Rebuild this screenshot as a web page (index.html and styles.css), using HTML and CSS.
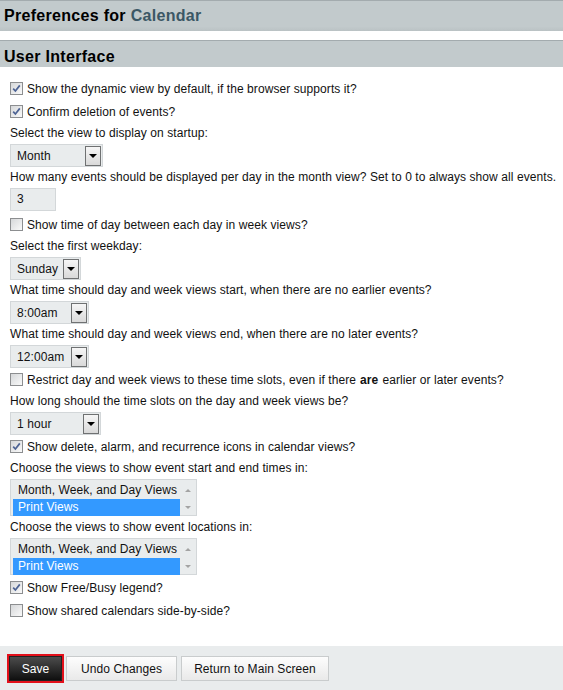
FILE: index.html
```html
<!DOCTYPE html>
<html>
<head>
<meta charset="utf-8">
<title>Preferences for Calendar</title>
<link rel="stylesheet" href="styles.css">
</head>
<body>
<div class="page">
  <h1 class="hdr hdr-main">Preferences for <span class="app">Calendar</span></h1>
  <h2 class="hdr hdr-sec">User Interface</h2>

  <div class="content">
    <label class="chk"><span class="cb on"><svg width="13" height="13" viewBox="0 0 13 13"><defs><linearGradient id="g1" x1="0" y1="0" x2="1" y2="1"><stop offset="0" stop-color="#d4d6d8"/><stop offset="1" stop-color="#fbfbfb"/></linearGradient></defs><rect x="0.5" y="0.5" width="12" height="12" fill="url(#g1)" stroke="#8c8e90"/><path d="M3.2 6.6 L5.4 9 L9.8 3.4" fill="none" stroke="#4d6394" stroke-width="1.7"/></svg></span>Show the dynamic view by default, if the browser supports it?</label>
    <label class="chk"><span class="cb on"><svg width="13" height="13" viewBox="0 0 13 13"><rect x="0.5" y="0.5" width="12" height="12" fill="url(#g1)" stroke="#8c8e90"/><path d="M3.2 6.6 L5.4 9 L9.8 3.4" fill="none" stroke="#4d6394" stroke-width="1.7"/></svg></span>Confirm deletion of events?</label>

    <div class="lbl">Select the view to display on startup:</div>
    <div class="row-sel"><div class="sel w-month"><span class="val">Month</span><span class="arr"></span></div></div>

    <div class="lbl">How many events should be displayed per day in the month view? Set to 0 to always show all events.</div>
    <div class="row-inp"><div class="inp">3</div></div>

    <label class="chk"><span class="cb"><svg width="13" height="13" viewBox="0 0 13 13"><rect x="0.5" y="0.5" width="12" height="12" fill="url(#g1)" stroke="#8c8e90"/></svg></span>Show time of day between each day in week views?</label>

    <div class="lbl">Select the first weekday:</div>
    <div class="row-sel"><div class="sel w-day"><span class="val">Sunday</span><span class="arr"></span></div></div>

    <div class="lbl">What time should day and week views start, when there are no earlier events?</div>
    <div class="row-sel"><div class="sel w-time"><span class="val">8:00am</span><span class="arr"></span></div></div>

    <div class="lbl">What time should day and week views end, when there are no later events?</div>
    <div class="row-sel"><div class="sel w-time"><span class="val">12:00am</span><span class="arr"></span></div></div>

    <label class="chk"><span class="cb"><svg width="13" height="13" viewBox="0 0 13 13"><rect x="0.5" y="0.5" width="12" height="12" fill="url(#g1)" stroke="#8c8e90"/></svg></span>Restrict day and week views to these time slots, even if there <b>are</b> earlier or later events?</label>

    <div class="lbl">How long should the time slots on the day and week views be?</div>
    <div class="row-sel"><div class="sel w-slot"><span class="val">1 hour</span><span class="arr"></span></div></div>

    <label class="chk"><span class="cb on"><svg width="13" height="13" viewBox="0 0 13 13"><rect x="0.5" y="0.5" width="12" height="12" fill="url(#g1)" stroke="#8c8e90"/><path d="M3.2 6.6 L5.4 9 L9.8 3.4" fill="none" stroke="#4d6394" stroke-width="1.7"/></svg></span>Show delete, alarm, and recurrence icons in calendar views?</label>

    <div class="lbl">Choose the views to show event start and end times in:</div>
    <div class="row-list">
      <div class="list">
        <div class="opts"><div class="opt">Month, Week, and Day Views</div><div class="opt sel-opt">Print Views</div></div>
        <div class="sb"><span class="up"></span><span class="dn"></span></div>
      </div>
    </div>

    <div class="lbl">Choose the views to show event locations in:</div>
    <div class="row-list">
      <div class="list">
        <div class="opts"><div class="opt">Month, Week, and Day Views</div><div class="opt sel-opt">Print Views</div></div>
        <div class="sb"><span class="up"></span><span class="dn"></span></div>
      </div>
    </div>

    <label class="chk"><span class="cb on"><svg width="13" height="13" viewBox="0 0 13 13"><rect x="0.5" y="0.5" width="12" height="12" fill="url(#g1)" stroke="#8c8e90"/><path d="M3.2 6.6 L5.4 9 L9.8 3.4" fill="none" stroke="#4d6394" stroke-width="1.7"/></svg></span>Show Free/Busy legend?</label>
    <label class="chk"><span class="cb"><svg width="13" height="13" viewBox="0 0 13 13"><rect x="0.5" y="0.5" width="12" height="12" fill="url(#g1)" stroke="#8c8e90"/></svg></span>Show shared calendars side-by-side?</label>
  </div>

  <div class="bar">
    <button class="btn btn-save">Save</button>
    <button class="btn btn-undo">Undo Changes</button>
    <button class="btn btn-ret">Return to Main Screen</button>
  </div>
</div>
</body>
</html>
```

FILE: styles.css
```css
html, body {
  margin: 0;
  padding: 0;
  background: #fff;
}
body {
  font-family: "Liberation Sans", Arial, sans-serif;
  font-size: 12px;
  letter-spacing: 0.08px;
  color: #111;
}
.page {
  width: 563px;
  height: 690px;
  display: flex;
  flex-direction: column;
}
.hdr {
  margin: 0;
  font-size: 16px;
  font-weight: bold;
  letter-spacing: 0.3px;
  color: #000;
  background: linear-gradient(#c2cacc 0%, #c2cacc 85%, #bac2c4 100%);
  border-top: 1px solid #a3abae;
  padding-left: 4px;
}
.hdr-main {
  height: 30px;
  line-height: 30px;
}
.app {
  color: #3b5765;
}
.hdr-sec {
  margin-top: 9px;
  height: 26px;
  line-height: 31px;
  background: #c2cacc;
}
.content {
  padding: 10px 0 0 10px;
  display: flex;
  flex-direction: column;
  flex: 1;
}
.chk {
  height: 23px;
  display: flex;
  align-items: center;
  gap: 4px;
}
.cb {
  width: 13px;
  height: 13px;
  display: block;
}
.cb svg {
  display: block;
}
.lbl {
  height: 21px;
  line-height: 21px;
  white-space: nowrap;
}
.row-sel {
  height: 23px;
}
.sel {
  box-sizing: border-box;
  height: 23px;
  border: 1px solid #d3d7d9;
  background: #e9eced;
  display: flex;
  align-items: center;
  justify-content: space-between;
  padding: 0 1px 0 6px;
}
.w-month { width: 93px; }
.w-day { width: 71px; }
.w-time { width: 79px; }
.w-slot { width: 91px; }
.arr {
  box-sizing: border-box;
  width: 16px;
  height: 20px;
  border: 1px solid #6f7172;
  background: linear-gradient(#f6f6f6, #d9d9d9);
  display: flex;
  align-items: center;
  justify-content: center;
}
.arr::after {
  content: "";
  width: 0;
  height: 0;
  border-left: 4px solid transparent;
  border-right: 4px solid transparent;
  border-top: 4px solid #000;
}
.row-inp {
  height: 25px;
}
.inp {
  box-sizing: border-box;
  width: 46px;
  height: 23px;
  line-height: 21px;
  border: 1px solid #d3d7d9;
  background: #e9eced;
  padding-left: 6px;
}
.row-list {
  height: 38px;
}
.list {
  box-sizing: border-box;
  width: 187px;
  height: 37px;
  border: 1px solid #d3d7d9;
  background: #e9eced;
  display: flex;
  padding: 2px 0 0 2px;
}
.opts {
  flex: 1;
}
.opt {
  height: 17px;
  line-height: 17px;
  padding-left: 5px;
  white-space: nowrap;
}
.sel-opt {
  background: #3399ff;
  color: #fff;
}
.sb {
  width: 16px;
  display: flex;
  flex-direction: column;
  align-items: center;
  justify-content: space-between;
  padding: 7px 0 6px;
}
.up, .dn {
  width: 0;
  height: 0;
  border-left: 3px solid transparent;
  border-right: 3px solid transparent;
}
.up { border-bottom: 3px solid #a3a3a3; }
.dn { border-top: 3px solid #a3a3a3; }
.bar {
  height: 44px;
  box-sizing: border-box;
  background: #e9eced;
  display: flex;
  align-items: flex-start;
  gap: 4px;
  padding: 10px 0 0 9px;
}
.btn {
  box-sizing: border-box;
  height: 25px;
  font-family: "Liberation Sans", Arial, sans-serif;
  font-size: 12px;
  letter-spacing: 0.08px;
  color: #111;
  border: 1px solid #c9cccd;
  background: linear-gradient(#fdfdfd, #e9e9e9);
  padding: 0;
  margin: 0;
}
.btn-save {
  width: 53px;
  color: #fff;
  border: 1px solid #222;
  background: linear-gradient(#4c4c4c, #0f0f0f);
  outline: 2px solid #e3101b;
}
.btn-undo { width: 111px; }
.btn-ret { width: 148px; }
```
